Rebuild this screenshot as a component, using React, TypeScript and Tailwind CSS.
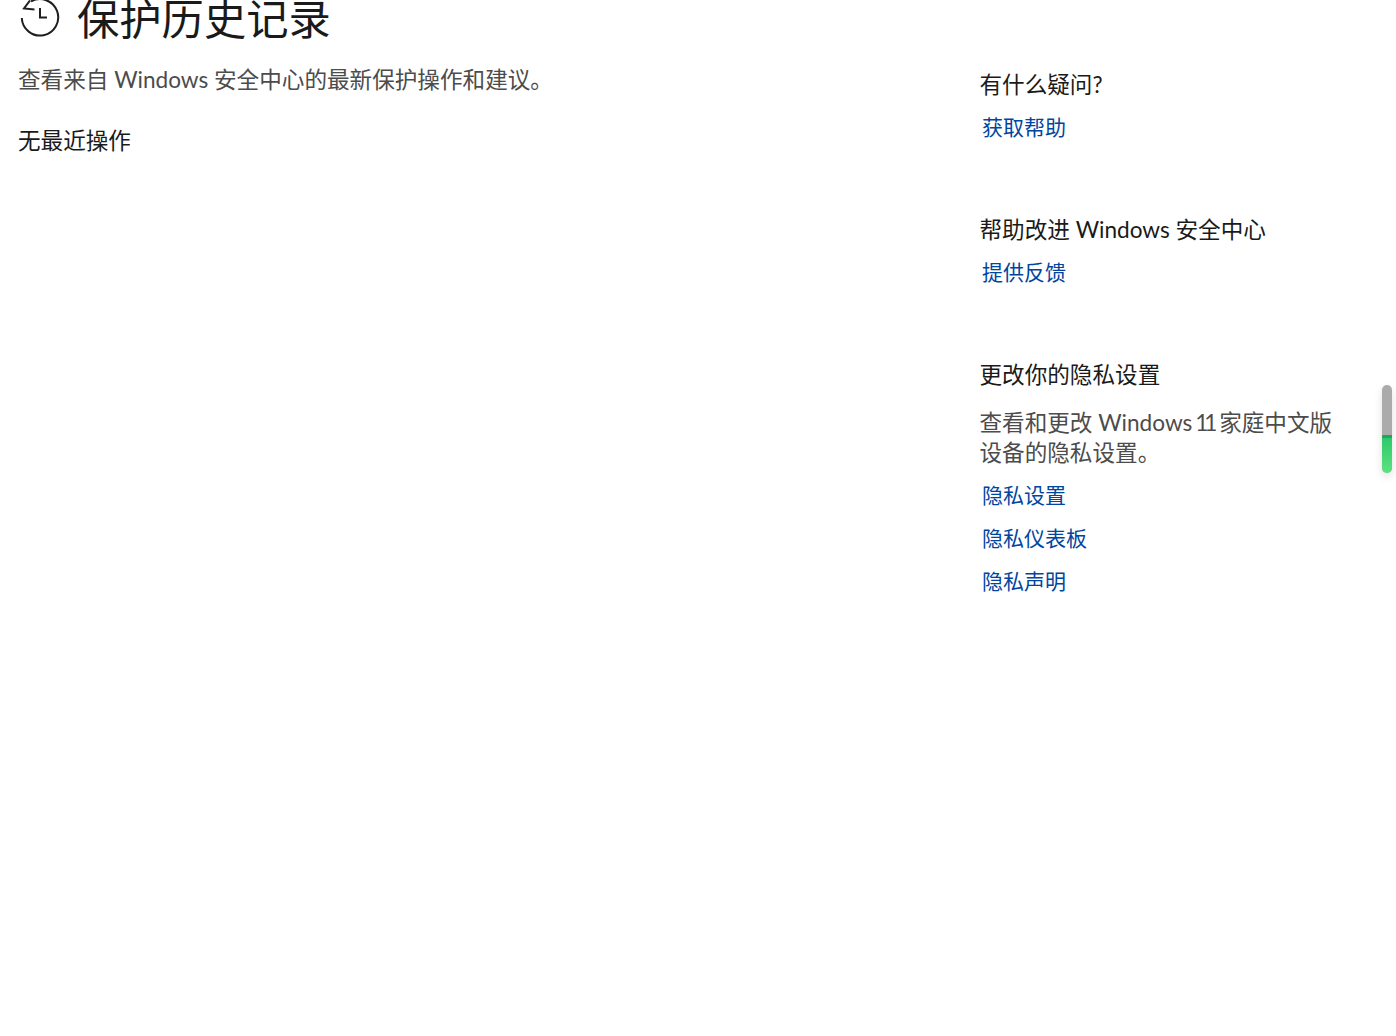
const font = { fontFamily: '"Lato", "Noto Sans CJK SC", sans-serif' };

function Section({ title, text, links, className }: { title: string; text?: React.ReactNode[]; links: string[]; className?: string }) {
  return (
    <div className={className}>
      <h3 className="text-[22.6px] leading-[30px] font-normal text-[#1a1a1a]">{title}</h3>
      {text && (
        <p className="mt-[18px] text-[22.6px] leading-[30px] font-normal text-[#4c4c4c]">
          {text.map((line, i) => (
            <span key={i} className="block whitespace-nowrap">{line}</span>
          ))}
        </p>
      )}
      <ul className="mt-[12px] flex flex-col gap-[13px] pl-[2.5px]">
        {links.map((link) => (
          <li key={link} className="text-[21px] leading-[30px] font-normal text-[#0046a0]">{link}</li>
        ))}
      </ul>
    </div>
  );
}

export default function App() {
  return (
    <div style={font} className="relative h-[1036px] w-[1396px] overflow-hidden bg-white">
      <div className="flex">
        {/* Main column */}
        <div className="w-[979.5px] pl-[18px]">
          <div className="mt-[-11px] flex h-[60px] items-center">
            <svg width="44" height="44" viewBox="0 0 44 44" fill="none" stroke="#1f1f1f" strokeWidth="2" className="shrink-0 overflow-visible">
              <path d="M12 3.5L6 11.5L16.5 12.5" />
              <path d="M13 4.5A18.2 18.2 0 1 1 3.8 21" />
              <path d="M22 11V20.5H29" />
            </svg>
            <h1 className="ml-[15px] text-[42.3px] leading-[60px] font-normal text-[#1a1a1a]">保护历史记录</h1>
          </div>
          <p className="mt-[16px] text-[22.6px] leading-[30px] font-normal text-[#4c4c4c]">查看来自 Windows 安全中心的最新保护操作和建议。</p>
          <p className="mt-[31px] text-[22.6px] leading-[30px] font-normal text-[#1a1a1a]">无最近操作</p>
        </div>

        {/* Side column */}
        <div className="w-[380px] pt-[70px]">
          <Section title="有什么疑问?" links={['获取帮助']} />
          <Section className="mt-[73px]" title="帮助改进 Windows 安全中心" links={['提供反馈']} />
          <Section
            className="mt-[73px]"
            title="更改你的隐私设置"
            text={[
              <>查看和更改 <span className="[word-spacing:-3px]">Windows <span className="tracking-[-4px]">11</span></span> 家庭中文版</>,
              '设备的隐私设置。',
            ]}
            links={['隐私设置', '隐私仪表板', '隐私声明']}
          />
        </div>
      </div>

      {/* Overlay scrollbar */}
      <div className="absolute left-[1382px] top-[385px] h-[88px] w-[10px] overflow-hidden rounded-full bg-[#ababab] shadow-[0_4px_8px_rgba(0,0,0,0.12)]">
        <div className="mt-[50px] h-[38px] border-t-[3px] border-[#20a85a] bg-gradient-to-b from-[#2bc96c] to-[#5be27f]" />
      </div>
    </div>
  );
}
